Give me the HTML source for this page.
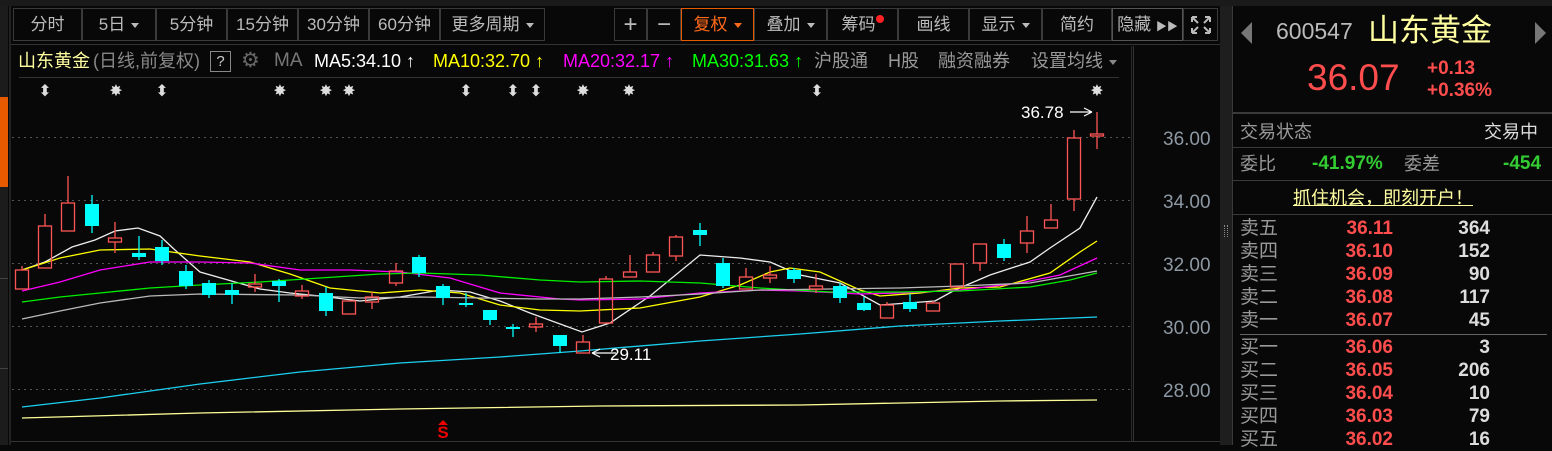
<!DOCTYPE html>
<html><head><meta charset="utf-8"><style>
*{margin:0;padding:0;box-sizing:border-box}
body{width:1552px;height:445px;background:#080808;overflow:hidden;position:relative;font-family:"Liberation Sans","Noto Sans CJK SC",sans-serif;color:#aaa}
.a{position:absolute;white-space:nowrap}
.btn{position:absolute;top:8px;height:33px;border:1px solid #3a3a3a;color:#bbb;font-size:17px;line-height:31px;text-align:center}
.tri{display:inline-block;width:0;height:0;border-left:4px solid transparent;border-right:4px solid transparent;border-top:5px solid #bbb;vertical-align:middle;margin-left:6px}
.row{position:absolute;left:1240px;width:300px;height:23px;font-size:19px;line-height:23px}
.row .l{position:absolute;left:0;color:#999}
.row .p{position:absolute;right:147px;color:#ff4d4d;font-weight:bold}
.row .v{position:absolute;right:50px;color:#ddd;font-weight:bold}
.i{position:absolute;top:50px;font-size:18px;line-height:22px;white-space:nowrap}
</style></head><body>
<div class="a" style="left:0;top:0;width:1552px;height:6px;background:#1a1a1a"></div>
<div class="a" style="left:0;top:6px;width:8px;height:439px;background:#1c1c1c"></div>
<div class="a" style="left:0;top:97px;width:8px;height:90px;background:#e85a00"></div>
<div class="a" style="left:0;top:278px;width:8px;height:1px;background:#444"></div>
<div class="a" style="left:0;top:368px;width:8px;height:1px;background:#444"></div>
<div class="a" style="left:9px;top:6px;width:2px;height:439px;background:#222"></div>

<div class="btn" style="left:13px;width:69px">分时</div>
<div class="btn" style="left:82px;width:74px">5日<span class="tri"></span></div>
<div class="btn" style="left:156px;width:71px">5分钟</div>
<div class="btn" style="left:227px;width:71px">15分钟</div>
<div class="btn" style="left:298px;width:71px">30分钟</div>
<div class="btn" style="left:369px;width:71px">60分钟</div>
<div class="btn" style="left:440px;width:105px">更多周期<span class="tri"></span></div>
<div class="btn" style="left:614px;width:33px;font-size:24px">+</div>
<div class="btn" style="left:647px;width:34px;font-size:24px">−</div>
<div class="btn" style="left:681px;width:73px;border-color:#e85a00;color:#ff6a1a">复权<span class="tri" style="border-top-color:#ff6a1a"></span></div>
<div class="btn" style="left:754px;width:73px">叠加<span class="tri"></span></div>
<div class="btn" style="left:827px;width:71px">筹码<span style="display:inline-block;width:8px;height:8px;border-radius:4px;background:#f22;vertical-align:top;margin-top:6px"></span></div>
<div class="btn" style="left:898px;width:71px">画线</div>
<div class="btn" style="left:969px;width:73px">显示<span class="tri"></span></div>
<div class="btn" style="left:1042px;width:70px">简约</div>
<div class="btn" style="left:1112px;width:71px;border-color:#555">隐藏 <span style="font-size:11px">▶▶</span></div>
<div class="btn" style="left:1183px;width:35px"><svg width="24" height="22" viewBox="0 0 24 22" style="margin-top:5px"><g stroke="#bbb" stroke-width="2" fill="none"><path d="M3 3l6 6M3 3h5M3 3v5M21 3l-6 6M21 3h-5M21 3v5M3 19l6-6M3 19h5M3 19v-5M21 19l-6-6M21 19h-5M21 19v-5"/></g></svg></div>

<div class="i" style="left:18px;color:#ffffa0">山东黄金</div>
<div class="i" style="left:93px;color:#888">(日线,前复权)</div>
<div class="i" style="left:210px;top:51px;border:1px solid #888;color:#ccc;width:21px;height:21px;text-align:center;font-size:15px;line-height:19px">?</div>
<div class="i" style="left:241px;color:#666;font-size:21px">⚙</div>
<div class="i" style="left:274px;color:#777;font-size:19px">MA</div>
<div class="i" style="left:314px;color:#fff">MA5:34.10 ↑</div>
<div class="i" style="left:433px;color:#ff0">MA10:32.70 ↑</div>
<div class="i" style="left:563px;color:#f0f">MA20:32.17 ↑</div>
<div class="i" style="left:692px;color:#0f0">MA30:31.63 ↑</div>
<div class="i" style="left:814px;color:#999">沪股通</div>
<div class="i" style="left:888px;color:#999">H股</div>
<div class="i" style="left:938px;color:#999">融资融券</div>
<div class="i" style="left:1031px;color:#999">设置均线<span class="tri" style="border-top-color:#888"></span></div>
<div class="a" style="left:19px;top:77px;width:1100px;height:1px;background:#333"></div>
<div class="a" style="left:1131px;top:46px;width:1px;height:395px;background:#2a2a2a"></div>
<div class="a" style="left:1133px;top:46px;width:1px;height:395px;background:#333"></div>
<div class="a" style="left:11px;top:44px;width:1209px;height:1px;background:#333"></div>
<div class="a" style="left:11px;top:441px;width:1209px;height:1px;background:#333"></div>

<svg class="a" style="left:0;top:0" width="1220" height="445">
<g stroke="#555" stroke-dasharray="2,4" stroke-width="1">
<line x1="12" y1="137.5" x2="1130" y2="137.5"/><line x1="12" y1="200.5" x2="1130" y2="200.5"/><line x1="12" y1="263.5" x2="1130" y2="263.5"/><line x1="12" y1="326.5" x2="1130" y2="326.5"/><line x1="12" y1="389.5" x2="1130" y2="389.5"/>
</g>
<g fill="#8d98a3" font-family="Liberation Sans" font-size="19"><text x="1163" y="145">36.00</text><text x="1163" y="208">34.00</text><text x="1163" y="271">32.00</text><text x="1163" y="334">30.00</text><text x="1163" y="397">28.00</text></g>
<g fill="#ddd" font-size="16" font-family="DejaVu Sans" text-anchor="middle">
<text x="45" y="96">⬍</text><text x="116" y="96">✸</text><text x="162" y="96">⬍</text><text x="280" y="96">✸</text><text x="326" y="96">✸</text><text x="349" y="96">✸</text><text x="466" y="96">⬍</text><text x="513" y="96">⬍</text><text x="536" y="96">⬍</text><text x="583" y="96">✸</text><text x="629" y="96">✸</text><text x="817" y="96">⬍</text><text x="1097" y="96">✸</text>
</g>
<g fill="none" stroke-width="1.3">
<polyline stroke="#eee" points="22,270 45,262 72,247 95,240 115,231 138,228 160,236 175,250 200,272 235,282 260,289 290,293 320,296 360,301 400,297 440,290 470,292 500,301 530,313 582,332 610,323 650,296 700,255 740,258 770,262 800,275 840,283 880,305 935,301 955,290 990,275 1030,262 1050,248 1080,228 1097,197"/>
<polyline stroke="#ff0" points="22,270 60,258 100,250 150,249 200,256 250,262 290,274 330,288 380,293 420,290 460,293 500,305 540,310 580,311 640,308 700,297 740,285 770,272 790,268 820,272 860,290 880,296 920,293 960,288 1000,287 1050,273 1080,252 1097,241"/>
<polyline stroke="#f0f" points="22,291 60,282 100,270 150,262 200,262 250,263 300,270 350,270 400,272 450,278 500,293 560,299 580,300 640,299 700,293 760,290 800,291 860,294 900,293 960,290 1020,283 1060,275 1097,258"/>
<polyline stroke="#0e0" points="22,302 60,297 100,293 150,288 200,285 260,282 320,278 380,274 420,273 480,275 540,280 580,282 640,281 700,283 760,288 830,292 900,292 960,291 1030,287 1070,280 1097,273"/>
<polyline stroke="#bbb" points="22,319 60,311 100,303 150,296 200,294 300,295 360,298 420,297 480,298 540,299 580,299 640,297 700,294 760,290 830,289 900,288 960,286 1030,283 1097,271"/>
<polyline stroke="#1cd0f0" points="22,407 100,398 200,384 300,372 400,363 500,357 580,351 700,341 800,334 900,326 1000,321 1097,317"/>
<polyline stroke="#ffff99" points="22,418 200,413 400,409 600,406 800,405 1000,401 1097,400"/>
</g>
<g stroke="#f55" fill="none" stroke-width="1.3">
<rect x="15.5" y="270" width="13" height="19"/><line x1="22" y1="266" x2="22" y2="270"/>
<rect x="38.5" y="226" width="13" height="42"/><line x1="45" y1="214" x2="45" y2="226"/>
<rect x="61.5" y="203" width="13" height="28"/><line x1="68" y1="176" x2="68" y2="203"/>
<rect x="108.5" y="238" width="13" height="4"/><line x1="115" y1="222" x2="115" y2="238"/><line x1="115" y1="242" x2="115" y2="253"/>
<rect x="248.5" y="284" width="13" height="3"/><line x1="255" y1="274" x2="255" y2="284"/><line x1="255" y1="287" x2="255" y2="292"/>
<rect x="295.5" y="291" width="13" height="5"/><line x1="302" y1="285" x2="302" y2="291"/><line x1="302" y1="296" x2="302" y2="299"/>
<rect x="342.5" y="301" width="13" height="13"/>
<rect x="365.5" y="297" width="13" height="5"/><line x1="372" y1="292" x2="372" y2="297"/><line x1="372" y1="302" x2="372" y2="309"/>
<rect x="389.5" y="271" width="13" height="12"/><line x1="396" y1="263" x2="396" y2="271"/><line x1="396" y1="283" x2="396" y2="286"/>
<rect x="529.5" y="324" width="13" height="3"/><line x1="536" y1="317" x2="536" y2="324"/><line x1="536" y1="327" x2="536" y2="332"/>
<rect x="576.5" y="342" width="13" height="11"/><line x1="583" y1="335" x2="583" y2="342"/>
<rect x="599.5" y="279" width="13" height="44"/><line x1="606" y1="276" x2="606" y2="279"/>
<rect x="623.5" y="272" width="13" height="5"/><line x1="630" y1="255" x2="630" y2="272"/>
<rect x="646.5" y="255" width="13" height="17"/><line x1="653" y1="252" x2="653" y2="255"/>
<rect x="669.5" y="237" width="13" height="19"/><line x1="676" y1="235" x2="676" y2="237"/><line x1="676" y1="256" x2="676" y2="261"/>
<rect x="739.5" y="277" width="13" height="12"/><line x1="746" y1="268" x2="746" y2="277"/>
<rect x="763.5" y="275" width="13" height="3"/><line x1="770" y1="266" x2="770" y2="275"/><line x1="770" y1="278" x2="770" y2="283"/>
<rect x="809.5" y="286" width="13" height="3"/><line x1="816" y1="274" x2="816" y2="286"/><line x1="816" y1="289" x2="816" y2="293"/>
<rect x="880.5" y="305" width="13" height="13"/><line x1="887" y1="302" x2="887" y2="305"/>
<rect x="926.5" y="303" width="13" height="8"/><line x1="933" y1="301" x2="933" y2="303"/>
<rect x="950.5" y="264" width="13" height="23"/>
<rect x="973.5" y="244" width="13" height="19"/><line x1="980" y1="263" x2="980" y2="271"/>
<rect x="1020.5" y="231" width="13" height="12"/><line x1="1027" y1="216" x2="1027" y2="231"/><line x1="1027" y1="243" x2="1027" y2="253"/>
<rect x="1044.5" y="220" width="13" height="8"/><line x1="1051" y1="204" x2="1051" y2="220"/>
<rect x="1067.5" y="138" width="13" height="61"/><line x1="1074" y1="130" x2="1074" y2="138"/><line x1="1074" y1="199" x2="1074" y2="211"/>
<rect x="1090.5" y="134" width="13" height="2"/><line x1="1097" y1="112" x2="1097" y2="134"/><line x1="1097" y1="136" x2="1097" y2="149"/>
</g>
<g fill="#0ff" stroke="#0ff" stroke-width="1.3">
<line x1="92" y1="195" x2="92" y2="233"/><rect x="85" y="204" width="14" height="22" stroke="none"/>
<line x1="139" y1="236" x2="139" y2="260"/><rect x="132" y="253" width="14" height="4" stroke="none"/>
<line x1="162" y1="240" x2="162" y2="265"/><rect x="155" y="247" width="14" height="14" stroke="none"/>
<line x1="186" y1="265" x2="186" y2="289"/><rect x="179" y="271" width="14" height="15" stroke="none"/>
<line x1="209" y1="280" x2="209" y2="298"/><rect x="202" y="283" width="14" height="12" stroke="none"/>
<line x1="232" y1="283" x2="232" y2="304"/><rect x="225" y="290" width="14" height="5" stroke="none"/>
<line x1="279" y1="279" x2="279" y2="302"/><rect x="272" y="281" width="14" height="5" stroke="none"/>
<line x1="326" y1="287" x2="326" y2="316"/><rect x="319" y="293" width="14" height="18" stroke="none"/>
<line x1="419" y1="255" x2="419" y2="277"/><rect x="412" y="257" width="14" height="16" stroke="none"/>
<line x1="443" y1="284" x2="443" y2="305"/><rect x="436" y="286" width="14" height="12" stroke="none"/>
<line x1="466" y1="293" x2="466" y2="307"/><rect x="459" y="303" width="14" height="2" stroke="none"/>
<line x1="490" y1="310" x2="490" y2="325"/><rect x="483" y="310" width="14" height="10" stroke="none"/>
<line x1="513" y1="324" x2="513" y2="337"/><rect x="506" y="327" width="14" height="2" stroke="none"/>
<line x1="560" y1="335" x2="560" y2="353"/><rect x="553" y="335" width="14" height="11" stroke="none"/>
<line x1="700" y1="223" x2="700" y2="246"/><rect x="693" y="230" width="14" height="5" stroke="none"/>
<line x1="723" y1="258" x2="723" y2="288"/><rect x="716" y="263" width="14" height="23" stroke="none"/>
<line x1="794" y1="268" x2="794" y2="283"/><rect x="787" y="270" width="14" height="9" stroke="none"/>
<line x1="840" y1="283" x2="840" y2="303"/><rect x="833" y="286" width="14" height="12" stroke="none"/>
<line x1="864" y1="297" x2="864" y2="311"/><rect x="857" y="303" width="14" height="7" stroke="none"/>
<line x1="910" y1="294" x2="910" y2="312"/><rect x="903" y="302" width="14" height="7" stroke="none"/>
<line x1="1004" y1="239" x2="1004" y2="261"/><rect x="997" y="244" width="14" height="14" stroke="none"/>
</g>
<g stroke="#fff" fill="none" stroke-width="1.2"><path d="M592 353h24M592 353l8-4M592 353l8 4"/><path d="M1070 112h22M1092 112l-8-4M1092 112l-8 4"/></g>
<text x="610" y="360" fill="#fff" font-size="17" font-family="Liberation Sans">29.11</text>
<text x="1021" y="118" fill="#fff" font-size="17" font-family="Liberation Sans">36.78</text>
<text x="443" y="438" fill="#e00" font-size="17" font-weight="bold" font-family="Liberation Sans" text-anchor="middle">S</text>
<path d="M438 425l5-5 5 5z" fill="#e00"/>
</svg>

<div class="a" style="left:1220px;top:6px;width:12px;height:439px;background:#1e1e1e"></div>
<div class="a" style="left:1232px;top:6px;width:1px;height:439px;background:#3a3a3a"></div>
<div class="a" style="left:1224px;top:225px;width:4px;height:12px;border-left:1px dotted #888;border-right:1px dotted #888"></div>
<div class="a" style="left:1241px;top:22px;width:0;height:0;border-top:11px solid transparent;border-bottom:11px solid transparent;border-right:11px solid #777"></div>
<div class="a" style="left:1535px;top:22px;width:0;height:0;border-top:11px solid transparent;border-bottom:11px solid transparent;border-left:11px solid #777"></div>
<div class="a" style="left:1276px;top:16px;font-size:23px;color:#bbb;line-height:30px">600547</div>
<div class="a" style="left:1368px;top:12px;font-size:31px;color:#ffffa0;line-height:38px">山东黄金</div>
<div class="a" style="left:1307px;top:57px;font-size:37px;color:#ff4d4d;line-height:42px">36.07</div>
<div class="a" style="left:1427px;top:58px;font-size:19px;color:#ff4d4d;font-weight:bold;line-height:22px">+0.13<br>+0.36%</div>
<div class="a" style="left:1233px;top:112px;width:319px;height:2px;background:#3a3a3a"></div>
<div class="a" style="left:1240px;top:120px;font-size:18px;color:#999;line-height:24px">交易状态</div>
<div class="a" style="left:1484px;top:120px;font-size:18px;color:#ddd;line-height:24px">交易中</div>
<div class="a" style="left:1233px;top:147px;width:319px;height:1px;background:#3a3a3a"></div>
<div class="a" style="left:1240px;top:152px;font-size:18px;color:#999;line-height:24px">委比</div>
<div class="a" style="left:1312px;top:152px;font-size:19px;color:#3c3;font-weight:bold;line-height:24px">-41.97%</div>
<div class="a" style="left:1404px;top:152px;font-size:18px;color:#999;line-height:24px">委差</div>
<div class="a" style="left:1503px;top:152px;font-size:19px;color:#3c3;font-weight:bold;line-height:24px">-454</div>
<div class="a" style="left:1233px;top:180px;width:319px;height:1px;background:#3a3a3a"></div>
<div class="a" style="left:1293px;top:186px;font-size:18px;color:#ffffa0;line-height:24px;text-decoration:underline">抓住机会，即刻开户！</div>
<div class="a" style="left:1233px;top:214px;width:319px;height:1px;background:#3a3a3a"></div>
<div class="row" style="top:217px"><span class="l">卖五</span><span class="p">36.11</span><span class="v">364</span></div>
<div class="row" style="top:240px"><span class="l">卖四</span><span class="p">36.10</span><span class="v">152</span></div>
<div class="row" style="top:263px"><span class="l">卖三</span><span class="p">36.09</span><span class="v">90</span></div>
<div class="row" style="top:286px"><span class="l">卖二</span><span class="p">36.08</span><span class="v">117</span></div>
<div class="row" style="top:309px"><span class="l">卖一</span><span class="p">36.07</span><span class="v">45</span></div>
<div class="a" style="left:1240px;top:334px;width:307px;height:1px;background:#666"></div>
<div class="row" style="top:336px"><span class="l">买一</span><span class="p">36.06</span><span class="v">3</span></div>
<div class="row" style="top:359px"><span class="l">买二</span><span class="p">36.05</span><span class="v">206</span></div>
<div class="row" style="top:382px"><span class="l">买三</span><span class="p">36.04</span><span class="v">10</span></div>
<div class="row" style="top:405px"><span class="l">买四</span><span class="p">36.03</span><span class="v">79</span></div>
<div class="row" style="top:428px"><span class="l">买五</span><span class="p">36.02</span><span class="v">16</span></div>
</body></html>
